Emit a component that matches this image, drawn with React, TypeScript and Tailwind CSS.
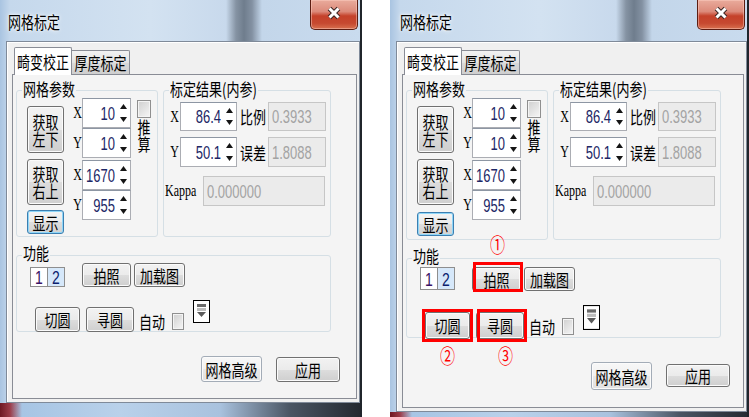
import React from "react";

type C = { children?: React.ReactNode; className?: string };

const SANS = "font-['Liberation_Sans',Arial,sans-serif]";
const SERIF = "font-['Liberation_Serif','Times_New_Roman',serif]";

const T = ({ children, className = "" }: C) => (
  <span className={"inline-block origin-center scale-y-[1.35] whitespace-nowrap leading-none " + className}>{children}</span>
);

const Btn = ({ children, className = "", kind = "n" }: C & { kind?: "n" | "focus" | "soft" }) => {
  const skin =
    kind === "focus"
      ? "border-[#3c7fb1] shadow-[inset_0_0_0_1px_#8fd6f8] bg-[linear-gradient(to_bottom,#f4f4f4_0%,#ebebeb_50%,#dddddd_51%,#d2d2d2_100%)]"
      : kind === "soft"
      ? "border-[#a3acb7] shadow-[inset_0_0_0_1px_#fbfbfb] bg-[linear-gradient(to_bottom,#f7f7f7_0%,#f1f1f1_50%,#e8e8e8_51%,#e1e1e1_100%)]"
      : "border-[#707070] shadow-[inset_0_0_0_1px_#fbfbfb] bg-[linear-gradient(to_bottom,#f2f2f2_0%,#ebebeb_50%,#dddddd_51%,#cfcfcf_100%)]";
  return (
    <div className={"relative shrink-0 flex flex-col items-center justify-center rounded-[3px] border text-[13px] text-black " + skin + " " + className}>
      {children}
    </div>
  );
};

const Up = () => (
  <svg width="7" height="5" viewBox="0 0 7 5">
    <path d="M3.5 0L7 5H0z" fill="#151515" />
  </svg>
);
const Down = () => (
  <svg width="7" height="5" viewBox="0 0 7 5">
    <path d="M0 0H7L3.5 5z" fill="#151515" />
  </svg>
);

const Spin = ({ v, className = "", left = false }: { v: string; className?: string; left?: boolean }) => (
  <div className={"flex shrink-0 bg-white border border-[#abadb3] border-t-[#8d96a3] " + className}>
    <div
      className={
        "flex-1 overflow-hidden flex items-center text-[13px] text-[#1d2766] " +
        SANS +
        (left ? " justify-start pl-[3px]" : " justify-end pr-[2px]")
      }
    >
      <T>{v}</T>
    </div>
    <div className="w-[13px] flex flex-col items-center justify-between py-[5px]">
      <Up />
      <Down />
    </div>
  </div>
);

const Field = ({ v, className = "" }: { v: string; className?: string }) => (
  <div className={"shrink-0 flex items-center pl-[3px] bg-[#ebebeb] border border-[#c6c6c6] text-[13px] text-[#a3a3a3] " + SANS + " " + className}>
    <T>{v}</T>
  </div>
);

const Check = ({ className = "" }: C) => (
  <div className={"shrink-0 border border-[#8f8f8f] shadow-[inset_0_0_0_1px_#f4f4f4] bg-[linear-gradient(135deg,#cfcfcf,#f6f6f6)] " + className} />
);

const Group = ({ label, className = "", children }: C & { label: string }) => (
  <div className={"relative shrink-0 border border-[#d5dfe5] rounded-[3px] " + className}>
    <div className="absolute left-[5px] -top-[9px] px-[1px] bg-[#f4f4f4] text-[13px] h-[13px] leading-none">
      <T>{label}</T>
    </div>
    {children}
  </div>
);

const Lbl = ({ children, className = "" }: C) => (
  <div className={"shrink-0 flex items-center justify-center text-[12px] text-black " + SERIF + " " + className}>
    <T>{children}</T>
  </div>
);

const Circ = ({ n, className = "" }: { n: string; className?: string }) => (
  <div className={"absolute w-[15px] h-[15px] text-center text-[15px] leading-none text-[#ff0000] " + className}>
    <T>{n}</T>
  </div>
);

const Close = () => (
  <div className="ml-auto mr-[2px] w-[48px] h-[30px] flex justify-center pt-[6px] rounded-b-[5px] border border-t-0 border-[#5c1d12] shadow-[inset_0_0_0_1px_rgba(255,210,200,0.45)] bg-[linear-gradient(to_bottom,#e9ab9c_0%,#dc8a7a_40%,#c5412a_55%,#c64930_80%,#d8704f_100%)]">
    <svg width="16" height="14" viewBox="0 0 16 14">
      <path d="M3.5 2.5L12.5 11.5M12.5 2.5L3.5 11.5" stroke="#3b2623" strokeWidth="5" />
      <path d="M3.5 2.5L12.5 11.5M12.5 2.5L3.5 11.5" stroke="#ffffff" strokeWidth="3" />
    </svg>
  </div>
);

function Win({ tall = false }: { tall?: boolean }) {
  return (
    <div
      className={
        (tall ? "w-[359px] " : "w-[362px] ") +
        "relative shrink-0 h-[417px] flex flex-col border-r-2 border-r-[#20252b] bg-[linear-gradient(to_right,#a9c4e1_0px,#c5d8ec_10px,#d3e2f1_150px,#c8d9ec_226px,#8593a3_236px,#6f7d8d_244px,#8391a2_252px,#c3d6ea_262px,#c9dbee_360px)]"
      }
    >
      {/* title bar */}
      <div className="h-[41px] shrink-0 flex items-start">
        <div className={(tall ? "ml-[10px] " : "ml-[8px] ") + "mt-[15px] h-[13px] text-[13px] leading-none text-black [text-shadow:0_0_5px_#fff,0_0_2px_#fff]"}>
          <T>网格标定</T>
        </div>
        <Close />
      </div>

      {/* client */}
      <div className="flex-1 min-h-0 flex pl-[6px]">
        <div className="flex-1 flex flex-col border border-[#7f8a99] bg-[#f0f0f0] shadow-[inset_1px_1px_0_#fff] pt-[5px] pl-[5px] pr-[2px] pb-[3px]">
          {/* tabs */}
          <div className="h-[27px] shrink-0 flex items-end pl-[2px]">
            <div className="relative z-10 -mb-px w-[58px] h-[28px] bg-white border border-b-0 border-[#898c95] rounded-t-[2px] flex items-center justify-center text-[13px] text-black">
              <T>畸变校正</T>
            </div>
            <div className="w-[58px] h-[24px] border border-l-0 border-b-0 border-[#898c95] rounded-tr-[2px] bg-[linear-gradient(to_bottom,#f2f2f2,#e3e3e3_50%,#d9d9d9_51%,#cfcfcf)] flex items-center justify-center text-[13px] text-black">
              <T>厚度标定</T>
            </div>
          </div>

          {/* tab pane */}
          <div className="flex-1 border border-[#898c95] bg-[#f4f4f4] flex flex-col pt-[15px] pl-[3px] text-black">
            <div className={(tall ? "h-[150px] " : "h-[147px] ") + "flex gap-[5px] shrink-0"}>
              {/* 网格参数 */}
              <Group label="网格参数" className="w-[142px] h-full flex items-start">
                <div className="ml-[10px] mt-[15px] flex flex-col">
                  <Btn className="w-[37px] h-[47px]">
                    <T className="leading-[15px] text-center">
                      获取
                      <br />
                      左下
                    </T>
                  </Btn>
                  <Btn className="mt-[6px] w-[37px] h-[46px]">
                    <T className="leading-[15px] text-center">
                      获取
                      <br />
                      右上
                    </T>
                  </Btn>
                  <Btn kind="focus" className={(tall ? "mt-[7px] " : "mt-[5px] ") + "w-[37px] h-[24px] text-[12px]"}>
                    <T>显示</T>
                  </Btn>
                </div>
                <div className="ml-[9px] mt-[7px] flex flex-col">
                  <div className="flex items-center h-[30px]">
                    <Lbl className="w-[9px]">X</Lbl>
                    <Spin v="10" className="w-[49px] h-[30px]" />
                  </div>
                  <div className="flex items-center h-[30px]">
                    <Lbl className="w-[9px]">Y</Lbl>
                    <Spin v="10" className="w-[49px] h-[30px]" />
                  </div>
                  <div className="mt-[2px] flex items-center h-[30px]">
                    <Lbl className="w-[9px]">X</Lbl>
                    <Spin v="1670" left className="w-[49px] h-[30px]" />
                  </div>
                  <div className="flex items-center h-[30px]">
                    <Lbl className="w-[9px]">Y</Lbl>
                    <Spin v="955" className="w-[49px] h-[30px]" />
                  </div>
                </div>
                <div className="ml-[5px] mt-[9px] flex flex-col items-center w-[16px]">
                  <Check className="w-[14px] h-[18px]" />
                  <div className="mt-[4px] text-[13px]">
                    <T className="leading-[12px] text-center">
                      推
                      <br />
                      算
                    </T>
                  </div>
                </div>
              </Group>

              {/* 标定结果 */}
              <Group label="标定结果(内参)" className="w-[168px] h-full flex flex-col">
                <div className="mt-[11px] flex items-center h-[29px]">
                  <Lbl className="ml-[5px] w-[11px]">X</Lbl>
                  <Spin v="86.4" className="w-[57px] h-[29px]" />
                  <div className="ml-[3px] text-[13px] leading-none">
                    <T>比例</T>
                  </div>
                  <Field v="0.3933" className="ml-[2px] w-[58px] h-[29px]" />
                </div>
                <div className="mt-[6px] flex items-center h-[30px]">
                  <Lbl className="ml-[5px] w-[11px]">Y</Lbl>
                  <Spin v="50.1" className="w-[57px] h-[30px]" />
                  <div className="ml-[3px] text-[13px] leading-none">
                    <T>误差</T>
                  </div>
                  <Field v="1.8088" className="ml-[2px] w-[58px] h-[30px]" />
                </div>
                <div className="mt-[9px] flex items-center h-[30px]">
                  <Lbl className="ml-[1px] w-[34px] justify-start text-[12.5px]">Kappa</Lbl>
                  <Field v="0.000000" className="ml-[4px] w-[122px] h-[30px]" />
                </div>
              </Group>
            </div>

            {/* 功能 */}
            <div className={(tall ? "h-[80px] " : "h-[77px] ") + "relative mt-[18px] w-[315px] shrink-0 border border-[#d5dfe5] rounded-[3px] flex flex-col"}>
              <div className="absolute left-[5px] -top-[10px] px-[1px] bg-[#f4f4f4] text-[13px] h-[13px] leading-none">
                <T>功能</T>
              </div>
              <div className={(tall ? "mt-[8px] " : "mt-[7px] ") + "flex items-start"}>
                <div className={(tall ? "mt-0 h-[23px] " : "mt-[4px] h-[20px] ") + "ml-[13px] flex " + SANS}>
                  <div className="w-[18px] h-full border border-[#8e8e8e] bg-white flex items-center justify-center text-[14px] text-[#3a1266]">
                    <T>1</T>
                  </div>
                  <div className="w-[17px] h-full border border-l-0 border-[#8e8e8e] bg-[#d6e8fa] flex items-center justify-center text-[14px] text-[#0d1f6e]">
                    <T>2</T>
                  </div>
                </div>
                <Btn className="ml-[17px] w-[49px] h-[24px]">
                  <T>拍照</T>
                  {tall && (
                    <>
                      <div className="pointer-events-none absolute left-0 -right-[3px] -top-[6px] -bottom-[2px] border-[3px] border-[#ff0000]" />
                      <Circ n="①" className="left-[17px] -top-[31px]" />
                    </>
                  )}
                </Btn>
                <Btn className="ml-[3px] w-[51px] h-[24px]">
                  <T>加载图</T>
                </Btn>
              </div>
              <div className={(tall ? "mt-[14px] " : "mt-[13px] ") + "flex items-start"}>
                <Btn className={(tall ? "h-[27px] " : "h-[25px] ") + "ml-[18px] mt-[7px] w-[45px]"}>
                  <T>切圆</T>
                  {tall && (
                    <>
                      <div className="pointer-events-none absolute -inset-[4px] border-[3px] border-[#ff0000]" />
                      <Circ n="②" className="left-[14px] top-[35px]" />
                    </>
                  )}
                </Btn>
                <Btn className={(tall ? "h-[27px] " : "h-[25px] ") + "ml-[6px] mt-[7px] w-[48px]"}>
                  <T>寻圆</T>
                  {tall && (
                    <>
                      <div className="pointer-events-none absolute left-0 -right-[4px] -top-[4px] -bottom-[4px] border-[3px] border-[#ff0000]" />
                      <Circ n="③" className="left-[21px] top-[35px]" />
                    </>
                  )}
                </Btn>
                <div className="ml-[5px] mt-[15px] text-[13px] leading-none">
                  <T>自动</T>
                </div>
                <Check className="ml-[7px] mt-[13px] w-[12px] h-[17px]" />
                <svg className={(tall ? "h-[25px] " : "h-[23px] ") + "ml-[9px] w-[17px] shrink-0"} viewBox="0 0 17 23" preserveAspectRatio="none">
                  <rect x="0.5" y="0.5" width="16" height="22" fill="#ffffff" stroke="#000000" />
                  <rect x="4" y="4" width="9" height="3" fill="#6a6a6a" />
                  <rect x="4" y="8" width="9" height="3" fill="#bdbdbd" />
                  <path d="M4 12H13L8.5 17z" fill="#5a5a5a" />
                </svg>
              </div>
            </div>

            {/* bottom buttons */}
            <div className="mt-[24px] flex items-start shrink-0">
              <Btn kind="soft" className={(tall ? "h-[28px] " : "h-[26px] ") + "ml-[185px] w-[61px]"}>
                <T>网格高级</T>
              </Btn>
              <Btn className={(tall ? "mt-[2px] h-[23px] " : "mt-[1px] h-[25px] ") + "ml-[14px] w-[64px]"}>
                <T>应用</T>
              </Btn>
            </div>
          </div>
        </div>
      </div>

      {/* bottom frame */}
      <div
        className={
          (tall ? "h-[5px] " : "h-[14px] ") +
          "shrink-0 bg-[linear-gradient(to_right,#6e1822_0px,#9b3b48_10px,#a7c5e4_22px,#b9d1ea_120px,#a9c2de_220px,#4a5563_290px,#23282f_362px)]"
        }
      />
    </div>
  );
}

export default function App() {
  return (
    <div className="w-[749px] h-[417px] overflow-hidden bg-white flex font-['Noto_Sans_CJK_SC','Noto_Sans',sans-serif]">
      <Win />
      <div className="w-[28px] shrink-0" />
      <Win tall />
    </div>
  );
}
